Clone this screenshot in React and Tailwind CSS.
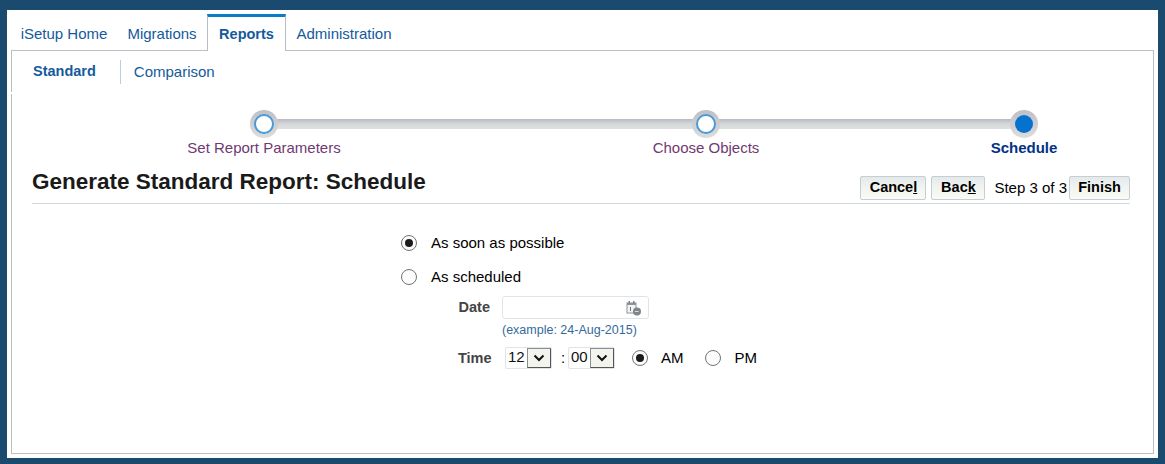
const Font = { fontFamily: '"Liberation Sans", Arial, sans-serif' };

function Radio({ checked }) {
  return (
    <span className="flex h-4 w-4 shrink-0 items-center justify-center rounded-full border border-[#6f7478] bg-[#fcfcfa]">
      {checked && <span className="h-2 w-2 rounded-full bg-[#1b1b1b]" />}
    </span>
  );
}

function Step({ label, current, className }) {
  return (
    <div className={`flex w-[200px] shrink-0 flex-col items-center ${className}`}>
      <div className="relative z-10 flex h-[28px] w-[28px] items-center justify-center rounded-full bg-gradient-to-b from-[#bfc0c6] to-[#dcdddd]">
        {current ? (
          <span className="h-[18px] w-[18px] rounded-full bg-[#0572ce]" />
        ) : (
          <span className="h-[20px] w-[20px] rounded-full border-2 border-[#4a9ad8] bg-white" />
        )}
      </div>
      <div className={`mt-[1px] text-[15px] leading-[18px] ${current ? "text-[14.5px] font-bold text-[#003286]" : "text-[#6f3a72]"}`}>
        {label}
      </div>
    </div>
  );
}

function Btn({ children, className = "" }) {
  return (
    <span className={`flex h-[24px] items-center justify-center rounded-[2px] border border-[#c4ced7] bg-gradient-to-b from-[#e4eaea] via-[#f2f4f0] to-[#fbfaf5] text-[14.5px] font-bold text-black ${className}`}>
      {children}
    </span>
  );
}

function TimeSelect({ value, className = "" }) {
  return (
    <span className={`flex h-[22px] items-center justify-between rounded-[2px] border border-[#dfe4ea] bg-white pl-[2px] ${className}`}>
      <span className="pb-[2px] text-[15px] leading-none text-[#111]">{value}</span>
      <span className="flex h-[20px] w-[24px] items-center justify-center border border-[#8a8f93] border-r-[#555] border-b-[#555] bg-[#f4f4ee]">
        <svg width="12" height="8" viewBox="0 0 12 8" fill="none">
          <path d="M1.5 1.5 6 6l4.5-4.5" stroke="#111" strokeWidth="2" />
        </svg>
      </span>
    </span>
  );
}

function CalendarIcon() {
  return (
    <svg width="16" height="16" viewBox="0 0 16 16" fill="none">
      <rect x="1" y="3" width="9" height="10" fill="#f2f3f3" stroke="#8f9599" />
      <rect x="1" y="3" width="9" height="2" fill="#8f9599" />
      <rect x="2.5" y="1" width="1.5" height="3" fill="#7c8286" />
      <rect x="7" y="1" width="1.5" height="3" fill="#7c8286" />
      <path d="M4.5 7v4" stroke="#777" />
      <circle cx="11" cy="11.5" r="4" fill="#7f878c" />
      <path d="M9 11.5h3.5" stroke="#d8dcdf" />
    </svg>
  );
}

export default function App() {
  return (
    <div style={Font} className="h-[464px] w-[1165px] overflow-hidden bg-[#1a4b6f] pb-[6px] pl-[7px] pr-[7px] pt-[10px]">
      <div className="flex h-[448px] flex-col bg-white pl-[4px] pr-[4px] pt-[4px]">
        <nav className="relative z-10 flex h-[36px] items-end text-[15px] text-[#145a9c]">
          <span className="flex h-[33px] w-[106px] items-center justify-center pt-[2px]">iSetup Home</span>
          <span className="flex h-[33px] w-[90px] items-center justify-center pt-[2px]">Migrations</span>
          <span className="-mb-[1px] flex h-[37px] w-[79px] items-center justify-center border-x border-[#b9bcc4] border-t-[3px] border-t-[#0a7bc8] bg-white pt-[2px] text-[14.5px] font-bold">Reports</span>
          <span className="flex h-[33px] w-[116px] items-center justify-center pt-[2px]">Administration</span>
        </nav>
        <section className="relative mb-[4px] flex min-h-0 flex-1 flex-col border border-[#bcbec6]">
          <span className="absolute -left-[1px] top-[41px] h-[2px] w-[1px] bg-white" />
          <div className="flex h-[42px] items-center text-[15px] text-[#145a9c]">
            <span className="pl-[21px] pr-[24px] text-[14.5px] font-bold">Standard</span>
            <span className="border-l border-[#b9cfe0] py-[4px] pl-[13px] leading-[16px]">Comparison</span>
          </div>
          <div className="relative mt-[17px] flex pl-[152px]">
            <div className="absolute left-[252px] right-[128px] top-[9px] h-[10px] bg-gradient-to-b from-[#b9bac1] via-[#d6d7d9] to-[#dfe0e0]" />
            <Step label="Set Report Parameters" />
            <Step label="Choose Objects" className="ml-[242px]" />
            <Step label="Schedule" current className="ml-[118px]" />
          </div>
          <header className="ml-[20px] mr-[23px] mt-[9px] flex h-[38px] items-end justify-between border-b border-[#d3dade] pb-[3px]">
            <h1 className="mb-[4px] text-[22.5px] font-bold leading-[28px] text-[#1a1a1a]">Generate Standard Report: Schedule</h1>
            <div className="flex items-center text-[15px] text-black">
              <Btn className="w-[66px]">Cance<u>l</u></Btn>
              <Btn className="ml-[5px] w-[54px]">Bac<u>k</u></Btn>
              <span className="ml-[9px] mr-[2px]">Step 3 of 3</span>
              <Btn className="w-[61px]">Finish</Btn>
            </div>
          </header>
          <div className="flex flex-col pl-[389px] pt-[30px] text-[15px] text-black">
            <label className="flex h-[18px] items-center gap-[14px]"><Radio checked />As soon as possible</label>
            <label className="mt-[16px] flex h-[18px] items-center gap-[14px]"><Radio />As scheduled</label>
            <div className="ml-[57px] mt-[10px] flex items-start">
              <span className="w-[32px] pt-[2px] text-right text-[14.5px] font-bold leading-[18px] text-[#444]">Date</span>
              <div className="ml-[12px]">
                <div className="flex h-[23px] w-[147px] items-center justify-end rounded-[3px] border border-[#dfe4ea] pr-[6px]"><CalendarIcon /></div>
                <div className="mt-[3px] text-[12.5px] leading-[16px] text-[#336a9c]">(example: 24-Aug-2015)</div>
              </div>
            </div>
            <div className="ml-[57px] mt-[8px] flex items-center">
              <span className="w-[36px] pt-[2px] text-[14.5px] font-bold text-[#444]">Time</span>
              <TimeSelect value="12" className="ml-[11px] w-[47px]" />
              <span className="w-[16px] pl-[6px] text-center">:</span>
              <TimeSelect value="00" className="w-[47px]" />
              <span className="ml-[17px]"><Radio checked /></span>
              <span className="ml-[13px]">AM</span>
              <span className="ml-[21px]"><Radio /></span>
              <span className="ml-[14px]">PM</span>
            </div>
          </div>
        </section>
      </div>
    </div>
  );
}
